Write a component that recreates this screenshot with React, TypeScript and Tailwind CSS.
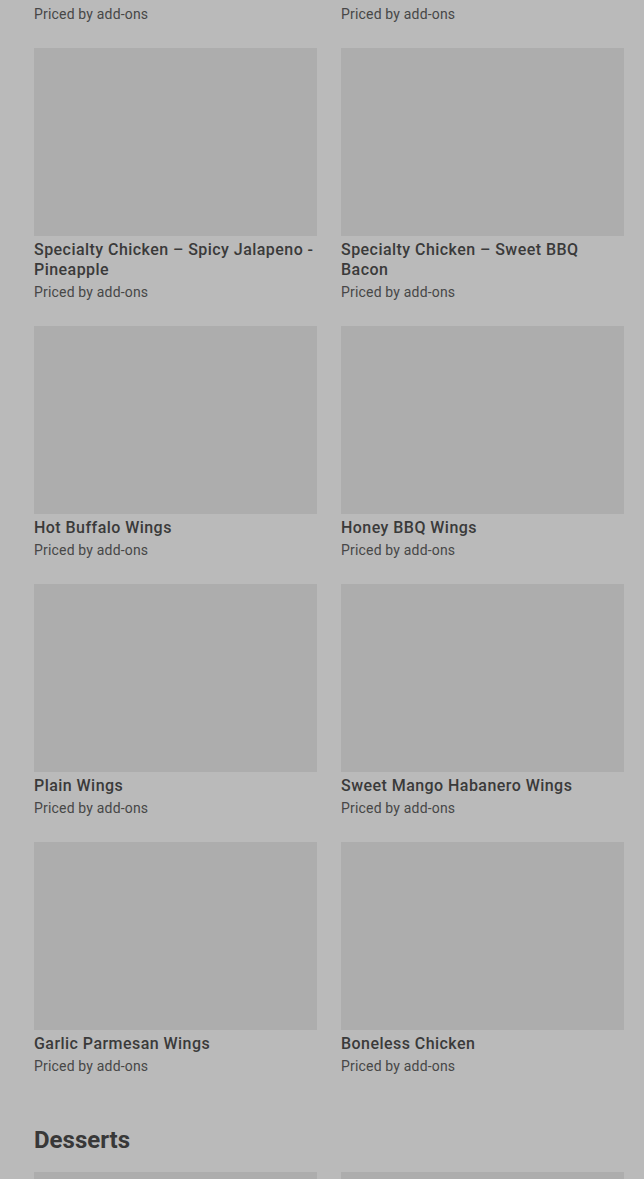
import React from "react";

const rows: [string, string][] = [
  ["Specialty Chicken – Spicy Jalapeno - Pineapple", "Specialty Chicken – Sweet BBQ Bacon"],
  ["Hot Buffalo Wings", "Honey BBQ Wings"],
  ["Plain Wings", "Sweet Mango Habanero Wings"],
  ["Garlic Parmesan Wings", "Boneless Chicken"],
];

function Item({ name }: { name: string }) {
  return (
    <div className="flex flex-col">
      <div className="h-[188px] w-full bg-[#adadad]" />
      <div className="mt-[4px] text-[16px] leading-[20px] font-medium tracking-[0.45px] text-[#3a3a3a]">{name}</div>
      <div className="mt-[2px] text-[14px] leading-[20px] tracking-[0.18px] text-[#474747]">Priced by add-ons</div>
    </div>
  );
}

export default function App() {
  return (
    <div
      className="h-[1179px] overflow-hidden bg-[#bababa] pl-[34px] pr-[20px]"
      style={{ fontFamily: "Roboto, 'Noto Sans', sans-serif" }}
    >
      <div className="grid grid-cols-2 gap-x-[24px] pt-[4px]">
        <div className="text-[14px] leading-[20px] tracking-[0.18px] text-[#474747]">Priced by add-ons</div>
        <div className="text-[14px] leading-[20px] tracking-[0.18px] text-[#474747]">Priced by add-ons</div>
      </div>
      <div className="mt-[24px] grid grid-cols-2 gap-x-[24px] gap-y-[24px]">
        {rows.flatMap(([a, b]) => [<Item key={a} name={a} />, <Item key={b} name={b} />])}
      </div>
      <h2 className="mt-[48px] text-[24px] leading-[32px] font-bold text-[#383838]">Desserts</h2>
      <div className="mt-[16px] grid grid-cols-2 gap-x-[24px]">
        <div className="h-[188px] bg-[#adadad]" />
        <div className="h-[188px] bg-[#adadad]" />
      </div>
    </div>
  );
}
